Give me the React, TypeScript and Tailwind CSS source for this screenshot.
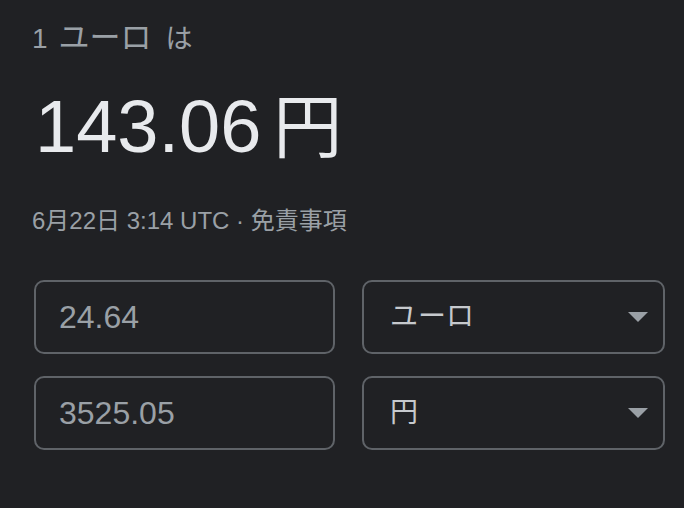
const font = "font-['Liberation_Sans','Noto_Sans_CJK_JP',sans-serif]"

function Caret() {
  return (
    <svg width="20" height="10" viewBox="0 0 20 10" className="shrink-0">
      <path d="M0 0h20L10 10z" fill="#9aa0a6" />
    </svg>
  )
}

function Field({ value }: { value: string }) {
  return (
    <div className="h-[74px] rounded-[10px] border-2 border-[#5f6368] flex items-center px-[23px]">
      <span className="text-[32px] leading-[40px] text-[#9aa0a6]">{value}</span>
    </div>
  )
}

function Select({ label }: { label: string }) {
  return (
    <div className="h-[74px] rounded-[10px] border-2 border-[#5f6368] flex items-center justify-between pl-[26px] pr-[15px]">
      <span className="text-[28px] leading-[36px] text-[#c6c9cd]">{label}</span>
      <Caret />
    </div>
  )
}

export default function App() {
  return (
    <div className={`w-[684px] h-[508px] bg-[#202124] pt-[21px] pl-[32px] overflow-hidden ${font}`}>
      <div className="text-[28px] leading-[36px] text-[#9aa0a6]">
        1<span className="ml-[11px] text-[31px] leading-[30px]">ユーロ</span>
        <span className="ml-[14px] text-[27px] leading-[30px]">は</span>
      </div>
      <div className="mt-[26px] pl-[3px] text-[74px] leading-[88px] text-[#e8eaed]">
        143.06<span className="ml-[12px] text-[69px] leading-[80px]">円</span>
      </div>
      <div className="mt-[34px] text-[24px] leading-[32px] text-[#9aa0a6]">6月22日 3:14 UTC · 免責事項</div>
      <div className="mt-[43px] ml-[2px] grid grid-cols-[301px_303px] gap-x-[27px] gap-y-[22px]">
        <Field value="24.64" />
        <Select label="ユーロ" />
        <Field value="3525.05" />
        <Select label="円" />
      </div>
    </div>
  )
}
